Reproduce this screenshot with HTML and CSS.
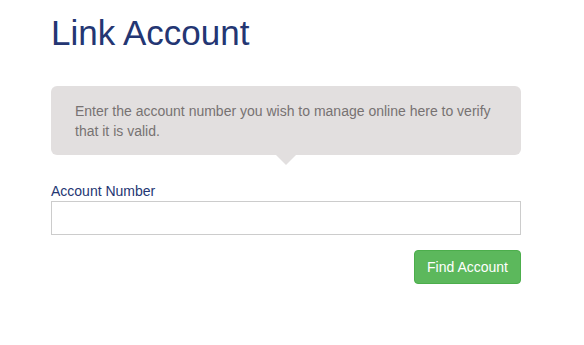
FILE: index.html
```html
<!DOCTYPE html>
<html>
<head>
<meta charset="utf-8">
<link rel="stylesheet" href="styles.css">
</head>
<body>
<div class="page">
  <h1 class="title">Link Account</h1>
  <div class="callout">
    <p class="callout-text">Enter the account number you wish to manage online here to verify that it is valid.</p>
  </div>
  <form class="form">
    <label class="label" for="acct">Account Number</label>
    <input class="input" id="acct" type="text">
    <div class="actions">
      <button class="btn" type="button">Find Account</button>
    </div>
  </form>
</div>
</body>
</html>
```
FILE: styles.css
```css
html, body {
  margin: 0;
  padding: 0;
  background: #ffffff;
}
body {
  font-family: "Liberation Sans", Arial, sans-serif;
  font-size: 14px;
  line-height: 20px;
}
.page {
  width: 470px;
  padding: 13px 0 0 51px;
}
.title {
  margin: 0;
  font-size: 35px;
  line-height: 40px;
  font-weight: 400;
  color: #243673;
}
.callout {
  position: relative;
  margin-top: 33px;
  background: #e2dfdf;
  border-radius: 6px;
  padding: 15px 24px 14px;
}
.callout::after {
  content: "";
  position: absolute;
  left: 50%;
  bottom: -10px;
  margin-left: -10px;
  border-left: 10px solid transparent;
  border-right: 10px solid transparent;
  border-top: 10px solid #e2dfdf;
}
.callout-text {
  margin: 0;
  color: #777272;
}
.form {
  margin-top: 26px;
}
.label {
  display: block;
  color: #243673;
  margin-bottom: 0;
}
.input {
  display: block;
  box-sizing: border-box;
  width: 100%;
  height: 34px;
  margin: 0;
  border: 1px solid #cccccc;
  border-radius: 0;
  padding: 6px 12px;
  font: inherit;
}
.actions {
  display: flex;
  justify-content: flex-end;
  margin-top: 15px;
}
.btn {
  height: 34px;
  padding: 6px 12px;
  background: #5cb85c;
  border: 1px solid #4cae4c;
  border-radius: 4px;
  color: #ffffff;
  font: inherit;
  font-family: "Liberation Sans", Arial, sans-serif;
  font-size: 14px;
}
```
